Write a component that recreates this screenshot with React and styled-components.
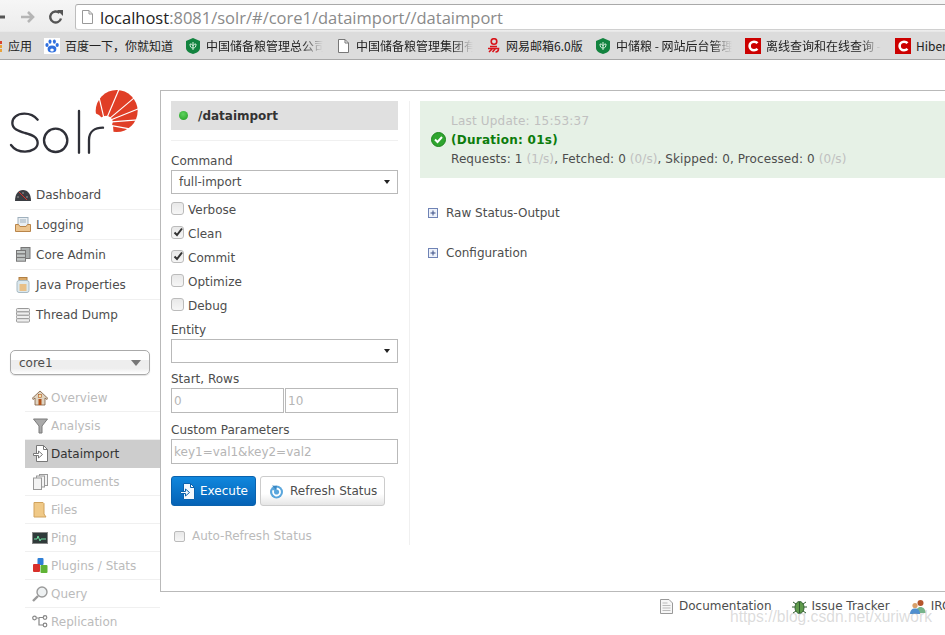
import React from 'react';
import styled, { createGlobalStyle } from 'styled-components';

const Global = createGlobalStyle`
	html, body {
		margin: 0;
		padding: 0;
		background: #fff;
	}
	body {
		width: 945px;
		height: 635px;
		overflow: hidden;
		font-family: 'DejaVu Sans', Verdana, sans-serif;
		font-size: 12px;
		color: #4d4d4d;
	}
`;

const Page = styled.div`
	position: relative;
	width: 945px;
	height: 635px;
	overflow: hidden;
`;

const Toolbar = styled.div`
	display: flex;
	align-items: center;
	height: 31px;
	padding-top: 3px;
	box-sizing: border-box;
	background: linear-gradient(#f6f6f6, #ececec);
`;

const NavButton = styled.div`
	display: flex;
	width: ${(p) => p.$w}px;
	margin-left: ${(p) => p.$ml || 0}px;
	justify-content: center;
`;

const AddressBar = styled.div`
	display: flex;
	align-items: center;
	gap: 7px;
	flex: 1;
	height: 26px;
	margin-left: 11px;
	padding-left: 6px;
	background: #fff;
	border-top: 1px solid #a9a9a9;
	border-left: 1px solid #bdbdbd;
	border-bottom: 1px solid #d0d0d0;
	border-radius: 3px 0 0 3px;
	box-sizing: border-box;
	font-family: 'Open Sans', 'Noto Sans', sans-serif;
	font-size: 16.5px;
	color: #8a8a8a;
	white-space: nowrap;
	overflow: hidden;

	b {
		font-weight: 400;
		color: #222;
	}
`;

const Bookmarks = styled.div`
	display: flex;
	align-items: center;
	height: 29px;
	box-sizing: border-box;
	background: #dcdcdc;
	border-bottom: 1px solid #a8a8a8;
	border-top: 1px solid #e8e8e8;
	overflow: hidden;
`;

const Bookmark = styled.div`
	display: flex;
	flex: none;
	align-items: center;
	gap: ${(p) => p.$gap}px;
	margin-left: ${(p) => p.$ml}px;
`;

const BookmarkText = styled.span`
	display: block;
	width: ${(p) => p.$w}px;
	white-space: nowrap;
	overflow: ${(p) => (p.$fade ? 'hidden' : 'visible')};
	font-family: 'Noto Sans CJK SC', 'Liberation Sans', sans-serif;
	font-size: 12px;
	color: #222;
	${(p) => p.$fade && 'mask-image: linear-gradient(90deg, #000 82%, transparent);'}
`;

const Content = styled.div`
	display: flex;
	align-items: flex-start;
	padding-top: 30px;
`;

const Sidebar = styled.div`
	flex: none;
	width: 160px;
`;

const LogoWrap = styled.div`
	height: 75px;
	padding-left: 5px;
	margin-top: -5px;
`;

const MainNav = styled.div`
	margin: 20px 0 0 10px;
`;

const IconSlot = styled.span`
	display: flex;
	flex: none;
	justify-content: center;
	width: ${(p) => p.$w}px;
`;

const NavItem = styled.div`
	display: flex;
	align-items: center;
	gap: 4px;
	height: 30px;
	box-sizing: border-box;
	padding-left: 4px;
	border-bottom: ${(p) => (p.$last ? 'none' : '1px solid #f0f0f0')};
	white-space: nowrap;
`;

const CoreSelect = styled.div`
	display: flex;
	align-items: center;
	justify-content: space-between;
	width: 140px;
	height: 25px;
	margin: 20px 0 0 10px;
	padding: 0 8px 0 8px;
	box-sizing: border-box;
	border: 1px solid #aaa;
	border-radius: 5px;
	background: linear-gradient(#fff 0 40%, #eee 40% 75%, #fff);
	box-shadow: 0 1px 1px rgba(0, 0, 0, 0.12);
`;

const Caret = styled.span`
	width: 0;
	height: 0;
	border-left: ${(p) => p.$size}px solid transparent;
	border-right: ${(p) => p.$size}px solid transparent;
	border-top: ${(p) => p.$size + 1}px solid ${(p) => p.$color};
`;

const SubNav = styled.div`
	margin: 9px 0 0 25px;
`;

const SubItem = styled.div`
	display: flex;
	align-items: center;
	gap: 3px;
	height: 28px;
	box-sizing: border-box;
	padding-left: 7px;
	white-space: nowrap;
	color: ${(p) => (p.$active ? '#333' : '#bbb')};
	background: ${(p) => (p.$active ? '#cdcdcd' : 'transparent')};
	border-bottom: 1px solid ${(p) => (p.$active ? '#cdcdcd' : '#f0f0f0')};
`;

const Main = styled.div`
	flex: none;
	width: 785px;
	box-sizing: border-box;
`;

const MainBox = styled.div`
	display: flex;
	height: 502px;
	padding-top: 10px;
	box-sizing: border-box;
	border: 1px solid #b9b9b9;
	border-width: 1px 0 1px 1px;
`;

const FormCol = styled.div`
	flex: none;
	width: 249px;
	height: 444px;
	padding: 0 11px 0 10px;
	box-sizing: border-box;
	border-right: 1px solid #f0f0f0;
`;

const Header = styled.div`
	display: flex;
	align-items: center;
	gap: 10px;
	height: 29px;
	padding-left: 8px;
	background: #e0e0e0;
	font-weight: 700;
	font-size: 12px;
	color: #333;
`;

const Dot = styled.span`
	width: 9px;
	height: 9px;
	border-radius: 50%;
	background: radial-gradient(circle at 45% 35%, #5fd35f, #1f9a1f);
`;

const Rule = styled.div`
	height: 1px;
	margin: 10px 0 13px;
	background: #f0f0f0;
`;

const FieldLabel = styled.div`
	height: 14px;
	line-height: 14px;
	margin-top: ${(p) => p.$mt || 0}px;
`;

const SelectBox = styled.div`
	display: flex;
	align-items: center;
	justify-content: space-between;
	width: 227px;
	height: 24px;
	margin-top: 2px;
	padding: 0 7px 1px;
	box-sizing: border-box;
	border: 1px solid #b9b9b9;
`;

const CheckList = styled.div`
	padding-top: 4px;
`;

const CheckRow = styled.div`
	display: flex;
	align-items: center;
	gap: 4px;
	height: 24px;
	color: ${(p) => (p.$muted ? '#bbb' : '#4d4d4d')};
`;

const CheckBox = styled.span`
	display: flex;
	align-items: center;
	justify-content: center;
	flex: none;
	width: 11px;
	height: 11px;
	margin-top: -4px;
	border: 1px solid #bbb;
	border-radius: 3px;
	background: linear-gradient(#e8e8e8, #f6f6f6);
	color: #333;
	box-sizing: content-box;
`;

const InputRow = styled.div`
	display: flex;
	gap: 1px;
	margin-top: 2px;
`;

const TextField = styled.div`
	display: flex;
	align-items: center;
	width: ${(p) => p.$w}px;
	height: 25px;
	padding-left: 2px;
	box-sizing: border-box;
	border: 1px solid #b9b9b9;
	color: #b5b5b5;
	font-size: 12px;
`;

const Actions = styled.div`
	display: flex;
	gap: 4px;
	margin-top: 12px;
`;

const Button = styled.div`
	display: flex;
	flex: none;
	align-items: center;
	gap: ${(p) => (p.$primary ? 5 : 6)}px;
	height: 30px;
	padding: 0 0 0 8px;
	box-sizing: border-box;
	width: ${(p) => p.$w}px;
	white-space: nowrap;
	border-radius: 3px;
	border: 1px solid ${(p) => (p.$primary ? '#0a62ad' : '#ccc')};
	background: ${(p) =>
		p.$primary ? 'linear-gradient(#1087dd, #0562b5)' : 'linear-gradient(#fff 60%, #e6e6e6)'};
	color: ${(p) => (p.$primary ? '#fff' : '#4d4d4d')};
`;

const AutoRefresh = styled.div`
	margin: 18px 0 0 3px;
`;

const SmallCheck = styled(CheckBox)`
	width: 9px;
	height: 9px;
	margin-top: 0;
	border-radius: 2px;
`;

const AutoLabel = styled.span`
	margin-left: 3px;
`;

const StatusCol = styled.div`
	flex: 1;
	padding-left: 10px;
`;

const StatusBox = styled.div`
	display: flex;
	height: 77px;
	padding: 11px 0 0 11px;
	box-sizing: border-box;
	background: #e6f1e6;
`;

const StatusIcon = styled.div`
	flex: none;
	width: 20px;
	padding-top: 20px;
`;

const StatusLines = styled.div`
	line-height: 19px;
	white-space: nowrap;
`;

const Muted = styled.span`
	color: #c0c0c0;
`;

const LastUpdate = styled(Muted)`
	display: block;
	letter-spacing: 0.2px;
`;

const Duration = styled.div`
	font-weight: 700;
	letter-spacing: 0.27px;
	color: #0c7c0c;
`;

const Counts = styled.div`
	letter-spacing: 0.09px;
`;

const Expander = styled.div`
	display: flex;
	align-items: center;
	gap: 8px;
	height: 16px;
	margin: ${(p) => p.$mt}px 0 0 8px;
`;

const Footer = styled.div`
	display: flex;
	align-items: center;
	height: 28px;
	white-space: nowrap;
`;

const FooterLink = styled.div`
	display: flex;
	flex: none;
	align-items: center;
	gap: ${(p) => p.$gap}px;
	margin-left: ${(p) => p.$ml}px;
`;

const Watermark = styled.div`
	position: absolute;
	left: 730px;
	top: 608px;
	font-family: 'Liberation Sans', Arial, sans-serif;
	font-size: 15.6px;
	color: rgba(170, 170, 170, 0.42);
	white-space: nowrap;
`;

function Svg({ w = 16, h = 16, vb, children }) {
	return (
		<svg width={w} height={h} viewBox={vb || `0 0 ${w} ${h}`} style={{ flex: 'none', display: 'block' }}>
			{children}
		</svg>
	);
}

// drawn in 3x units, the white rays and the hole cut the red disc into wedges
const SolrLogo = () => (
	<svg width="140" height="75" viewBox="0 0 420 225" style={{ display: 'block' }}>
		<circle cx="335" cy="78" r="63" fill="#e03e26" />
		<path d="M262 80l20 10 24 24 18 8 2 24h-64z" fill="#fff" />
		<circle cx="303" cy="112" r="20" fill="#fff" />
		<g stroke="#fff" strokeWidth="3.5">
			<path d="M300 112L280 28" />
			<path d="M300 112L344 8" />
			<path d="M300 112L400 28" />
			<path d="M300 112L408 68" />
			<path d="M300 112L408 104" />
			<path d="M300 118L398 136" />
		</g>
		<g fill="none" stroke="#2f3038" strokeWidth="7" strokeLinecap="round">
			<path d="M98 104C88 92 72 86 58 86 36 86 22 98 22 114 22 132 40 138 60 144 82 150 98 156 98 174 98 190 80 200 60 200 42 200 28 194 18 180" />
			<circle cx="152" cy="166" r="35" />
			<path d="M222 78V203" />
			<path d="M252 203V165C252 140 270 128 294 128" />
		</g>
	</svg>
);

const Shield = () => (
	<Svg w={14} h={16}>
		<path d="M7 0l7 3v7c0 3-3 5-7 6-4-1-7-3-7-6V3z" fill="#12833f" />
		<path d="M7 4v8M4 6c0 3 1 4 3 4 2 0 3-1 3-4-2 0-3 1-3 2 0-1-1-2-3-2z" stroke="#d6f0dc" strokeWidth="1" fill="none" />
	</Svg>
);

const RedC = () => (
	<Svg w={16} h={16}>
		<rect width="16" height="16" fill="#cc0000" />
		<path d="M12.5 5.2C11.6 4.2 10.4 3.8 9 3.8 6.6 3.8 4.6 5.6 4.6 8s2 4.2 4.4 4.2c1.4 0 2.6-.5 3.5-1.4" fill="none" stroke="#fff" strokeWidth="2.6" />
	</Svg>
);

const PageIcon = ({ stroke = '#777' }) => (
	<Svg w={11} h={14}>
		<path d="M.5.5h6.500l3.500 3.500v9.500H.5z" fill="#fff" stroke={stroke} />
		<path d="M7 .5V4h3.500" fill="none" stroke={stroke} />
	</Svg>
);

const AppsGrid = () => (
	<Svg w={3} h={14}>
		<rect y="2" width="2" height="3" fill="#d8432f" />
		<rect y="6" width="2" height="3" fill="#e8a33a" />
		<rect y="10" width="2" height="3" fill="#e8a33a" />
	</Svg>
);

const Baidu = () => (
	<Svg w={16} h={16}>
		<rect width="16" height="16" fill="#fff" />
		<g fill="#2f6fde">
			<ellipse cx="8" cy="11" rx="4.400" ry="3.600" />
			<ellipse cx="3" cy="7" rx="1.600" ry="2" />
			<ellipse cx="6" cy="3.600" rx="1.500" ry="2.200" />
			<ellipse cx="10.400" cy="3.600" rx="1.500" ry="2.200" />
			<ellipse cx="13.200" cy="7" rx="1.600" ry="2" />
		</g>
		<ellipse cx="8" cy="12" rx="1.800" ry="1.600" fill="#fff" />
	</Svg>
);

const Netease = () => (
	<Svg w={13} h={15}>
		<circle cx="7" cy="3.500" r="2.800" fill="none" stroke="#d8141a" strokeWidth="1.600" />
		<path d="M3 8.500h7M1 10.500h10.500c0 2-1 3.500-3 3.500M5.500 10.500L2 14M8.500 10.500L5.500 14" fill="none" stroke="#d8141a" strokeWidth="1.600" />
	</Svg>
);

const Gauge = () => (
	<Svg w={16} h={12}>
		<path d="M0 12C0 5 3 1 8 1s8 4 8 11z" fill="#3b3d42" />
		<path d="M4 3l8 8" stroke="#d9342b" strokeWidth="1" />
		<path d="M2 8h2M8 3v2M13 8h-2" stroke="#999" strokeWidth="1" />
	</Svg>
);

const Tray = () => (
	<Svg w={16} h={15}>
		<rect x="3" y="0.500" width="10" height="9" fill="#e9eef2" stroke="#9fb0bd" />
		<path d="M5 3h6M5 5h6" stroke="#9fb0bd" />
		<path d="M0.500 7.500h3l1.500 2h6l1.500-2h3v7H.5z" fill="#ecc48e" stroke="#b9854a" />
	</Svg>
);

const Servers = () => (
	<Svg w={15} h={15}>
		<rect x="5" y="0.500" width="9" height="11" fill="#a9aeae" stroke="#777" />
		<rect x="0.500" y="3.500" width="9" height="3.400" fill="#c2c7c6" stroke="#777" />
		<rect x="0.500" y="7" width="9" height="3.400" fill="#c2c7c6" stroke="#777" />
		<rect x="0.500" y="10.600" width="9" height="3.600" fill="#c2c7c6" stroke="#777" />
	</Svg>
);

const Jar = () => (
	<Svg w={14} h={16}>
		<rect x="3" y="0.500" width="8" height="3" fill="#d9a866" stroke="#b07f43" />
		<rect x="1" y="3.500" width="12" height="12" rx="2" fill="#dbe8ee" stroke="#a9bac3" />
		<rect x="3.500" y="7" width="7" height="7" fill="#e8c088" />
	</Svg>
);

const Stack = () => (
	<Svg w={14} h={15}>
		<g fill="#eee" stroke="#999">
			<rect x="0.500" y="0.500" width="13" height="3.400" rx="1" />
			<rect x="0.500" y="3.900" width="13" height="3.400" rx="1" />
			<rect x="0.500" y="7.300" width="13" height="3.400" rx="1" />
			<rect x="0.500" y="10.700" width="13" height="3.400" rx="1" />
		</g>
	</Svg>
);

const House = () => (
	<Svg w={16} h={16}>
		<path d="M8 1L0 8.500l1 1L3 8v7h10V8l2 1.500 1-1z" fill="#dfd4c2" stroke="#7d5b3c" strokeWidth=".8" />
		<rect x="6.500" y="9" width="3" height="6" fill="#b4551d" />
		<rect x="6.500" y="4.500" width="3" height="3" fill="#f3e5b0" stroke="#b4551d" strokeWidth=".6" />
	</Svg>
);

const Funnel = () => (
	<Svg w={15} h={16}>
		<path d="M.5 1h14L9 8v7H6V8z" fill="#aaa" stroke="#7b7b7b" />
	</Svg>
);

const FileArrow = ({ fill = '#fff', stroke = '#777' }) => (
	<Svg w={15} h={17}>
		<path d="M3.500.5h7l4 4v12h-11z" fill={fill} stroke={stroke} />
		<path d="M10.500.5v4h4" fill="none" stroke={stroke} />
		<path d="M.5 8.500h5V6l4 3.500-4 3.500v-2.500h-5z" fill={fill} stroke={stroke} />
	</Svg>
);

const Docs = () => (
	<Svg w={15} h={16}>
		<g fill="#f3f3f3" stroke="#999">
			<rect x="6.500" y=".5" width="8" height="11" />
			<rect x="3.500" y="2" width="8" height="11" />
			<rect x=".5" y="4" width="8" height="11.500" />
		</g>
	</Svg>
);

const Folder = () => (
	<Svg w={14} h={16}>
		<path d="M1 .5h9l1 1V12l2 3H1z" fill="#f0c987" stroke="#d0a25c" />
	</Svg>
);

const Monitor = () => (
	<Svg w={16} h={12}>
		<rect x=".5" y=".5" width="15" height="11" fill="#2f3a3a" stroke="#888" />
		<path d="M2 7h3l1-3 2 5 1-2h5" fill="none" stroke="#6fe0a0" />
	</Svg>
);

const Blocks = () => (
	<Svg w={15} h={15}>
		<rect x="4.500" y="0" width="6" height="7" rx="1" fill="#2f7fd6" />
		<rect x="0" y="6" width="7" height="8" rx="1" fill="#d8302b" />
		<rect x="7.500" y="7" width="7" height="8" rx="1" fill="#5fb334" />
	</Svg>
);

const Magnifier = () => (
	<Svg w={16} h={16}>
		<circle cx="10" cy="6" r="5" fill="#eef1f2" stroke="#9a9a9a" strokeWidth="1.400" />
		<path d="M6 10l-5 5" stroke="#9a9a9a" strokeWidth="2.400" />
	</Svg>
);

const Replication = () => (
	<Svg w={16} h={13}>
		<g fill="none" stroke="#888" strokeWidth="1.200">
			<circle cx="2.500" cy="3" r="1.800" />
			<circle cx="13" cy="2.500" r="1.800" />
			<circle cx="13" cy="10" r="1.800" />
			<path d="M4.500 3h2.500v7h4M7 2.500h4" />
		</g>
	</Svg>
);

const CheckMark = () => (
	<Svg w={10} h={10}>
		<path d="M1.500 5.500l2.500 2.500 5-6.500" fill="none" stroke="#333" strokeWidth="2" />
	</Svg>
);

const Refresh = () => (
	<Svg w={15} h={15}>
		<circle cx="7.500" cy="8" r="6.500" fill="#5aa6dc" />
		<path d="M7.500 4.500a3.500 3.500 0 1 1-3 1.800" fill="none" stroke="#fff" strokeWidth="1.800" />
		<path d="M3 1.500l5 .5-1 4z" fill="#3a88c4" />
	</Svg>
);

const GreenCheck = () => (
	<Svg w={15} h={15}>
		<circle cx="7.500" cy="7.500" r="7" fill="#2fa52f" stroke="#1c861c" />
		<path d="M4 7.500l2.500 2.500 4.500-5" fill="none" stroke="#fff" strokeWidth="2" />
	</Svg>
);

const PlusBox = () => (
	<Svg w={10} h={10}>
		<rect x=".5" y=".5" width="9" height="9" fill="#eef2fa" stroke="#6f83b5" />
		<path d="M2.500 5h5M5 2.500v5" stroke="#3a4f86" />
	</Svg>
);

const DocIcon = () => (
	<Svg w={13} h={15}>
		<path d="M.5.5h8.500l3.500 3.500v10.500H.5z" fill="#f6f6f6" stroke="#999" />
		<path d="M2.500 4h5M2.500 6.500h8M2.500 9h8M2.500 11.500h8" stroke="#bbb" />
	</Svg>
);

const Bug = () => (
	<Svg w={15} h={15}>
		<path d="M1 3l3 2M14 3l-3 2M0 8h3M15 8h-3M1 14l3-2M14 14l-3-2" stroke="#2f5d2f" />
		<ellipse cx="7.500" cy="8.500" rx="4.500" ry="6" fill="#5f9b4b" stroke="#2f5d2f" />
		<path d="M7.500 3v11" stroke="#2f5d2f" />
	</Svg>
);

const People = () => (
	<Svg w={16} h={15}>
		<circle cx="10.500" cy="4" r="3" fill="#b5552c" />
		<path d="M6 14c0-4 2-6 4.500-6S15.500 10 15.500 14z" fill="#77b48a" />
		<circle cx="5" cy="6.500" r="2.600" fill="#d9a06b" />
		<path d="M0 15c0-3.500 2-5.500 5-5.500S10 11.500 10 15z" fill="#4f8fcf" />
	</Svg>
);

const bookmarks = [
	{ ml: 5, gap: 0, icon: null, text: '应用', w: 26 },
	{ ml: 10, gap: 5, icon: <Baidu />, text: '百度一下，你就知道', w: 108 },
	{ ml: 13, gap: 6, icon: <Shield />, text: '中国储备粮管理总公司', w: 117, fade: true },
	{ ml: 15, gap: 7, icon: <PageIcon />, text: '中国储备粮管理集团有', w: 117, fade: true },
	{ ml: 14, gap: 6, icon: <Netease />, text: '网易邮箱6.0版', w: 77 },
	{ ml: 13, gap: 6, icon: <Shield />, text: '中储粮 - 网站后台管理', w: 116, fade: true },
	{ ml: 13, gap: 5, icon: <RedC />, text: '离线查询和在线查询 -', w: 115, fade: true },
	{ ml: 14, gap: 5, icon: <RedC />, text: 'Hiber', w: 30 },
];

const mainNav = [
	{ icon: <Gauge />, label: 'Dashboard' },
	{ icon: <Tray />, label: 'Logging' },
	{ icon: <Servers />, label: 'Core Admin' },
	{ icon: <Jar />, label: 'Java Properties' },
	{ icon: <Stack />, label: 'Thread Dump', last: true },
];

const subNav = [
	{ icon: <House />, label: 'Overview' },
	{ icon: <Funnel />, label: 'Analysis' },
	{ icon: <FileArrow />, label: 'Dataimport', active: true },
	{ icon: <Docs />, label: 'Documents' },
	{ icon: <Folder />, label: 'Files' },
	{ icon: <Monitor />, label: 'Ping' },
	{ icon: <Blocks />, label: 'Plugins / Stats' },
	{ icon: <Magnifier />, label: 'Query' },
	{ icon: <Replication />, label: 'Replication' },
];

const checks = [
	{ label: 'Verbose' },
	{ label: 'Clean', on: true },
	{ label: 'Commit', on: true },
	{ label: 'Optimize' },
	{ label: 'Debug' },
];

export default function App() {
	return (
		<Page>
			<Global />
			<Toolbar>
				<NavButton $w={5}>
					<Svg w={5} h={14}>
						<path d="M-2 7h7" stroke="#555" strokeWidth="3" />
					</Svg>
				</NavButton>
				<NavButton $w={15} $ml={15}>
					<Svg w={15} h={14}>
						<path d="M1 7h11M8 2l5 5-5 5" fill="none" stroke="#b5b5b5" strokeWidth="2.600" />
					</Svg>
				</NavButton>
				<NavButton $w={16} $ml={13}>
					<Svg w={16} h={16}>
						<path d="M13 9.500A5.500 5.500 0 1 1 11.500 4" fill="none" stroke="#555" strokeWidth="2.400" />
						<path d="M9 1h6v6z" fill="#555" />
					</Svg>
				</NavButton>
				<AddressBar>
					<PageIcon stroke="#999" />
					<span>
						<b>localhost</b>:8081/solr/#/core1/dataimport//dataimport
					</span>
				</AddressBar>
			</Toolbar>
			<Bookmarks>
				<AppsGrid />
				{bookmarks.map((b) => (
					<Bookmark key={b.text} $ml={b.ml} $gap={b.gap}>
						{b.icon}
						<BookmarkText $w={b.w} $fade={b.fade}>
							{b.text}
						</BookmarkText>
					</Bookmark>
				))}
			</Bookmarks>
			<Content>
				<Sidebar>
					<LogoWrap>
						<SolrLogo />
					</LogoWrap>
					<MainNav>
						{mainNav.map((n) => (
							<NavItem key={n.label} $last={n.last}>
								<IconSlot $w={18}>{n.icon}</IconSlot>
								{n.label}
							</NavItem>
						))}
					</MainNav>
					<CoreSelect>
						core1
						<Caret $size={5} $color="#777" />
					</CoreSelect>
					<SubNav>
						{subNav.map((n) => (
							<SubItem key={n.label} $active={n.active}>
								<IconSlot $w={16}>{n.icon}</IconSlot>
								{n.label}
							</SubItem>
						))}
					</SubNav>
				</Sidebar>
				<Main>
					<MainBox>
						<FormCol>
							<Header>
								<Dot />
								/dataimport
							</Header>
							<Rule />
							<FieldLabel>Command</FieldLabel>
							<SelectBox>
								full-import
								<Caret $size={3} $color="#222" />
							</SelectBox>
							<CheckList>
								{checks.map((c) => (
									<CheckRow key={c.label}>
										<CheckBox>{c.on && <CheckMark />}</CheckBox>
										{c.label}
									</CheckRow>
								))}
							</CheckList>
							<FieldLabel $mt={5}>Entity</FieldLabel>
							<SelectBox>
								<span />
								<Caret $size={3} $color="#222" />
							</SelectBox>
							<FieldLabel $mt={9}>Start, Rows</FieldLabel>
							<InputRow>
								<TextField $w={113}>0</TextField>
								<TextField $w={113}>10</TextField>
							</InputRow>
							<FieldLabel $mt={10}>Custom Parameters</FieldLabel>
							<InputRow>
								<TextField $w={228}>key1=val1&amp;key2=val2</TextField>
							</InputRow>
							<Actions>
								<Button $primary $w={85}>
									<FileArrow fill="#f4f8fc" stroke="#0a62ad" />
									Execute
								</Button>
								<Button $w={125}>
									<Refresh />
									Refresh Status
								</Button>
							</Actions>
							<AutoRefresh>
								<CheckRow $muted>
									<SmallCheck />
									<AutoLabel>Auto-Refresh Status</AutoLabel>
								</CheckRow>
							</AutoRefresh>
						</FormCol>
						<StatusCol>
							<StatusBox>
								<StatusIcon>
									<GreenCheck />
								</StatusIcon>
								<StatusLines>
									<LastUpdate>Last Update: 15:53:37</LastUpdate>
									<Duration>(Duration: 01s)</Duration>
									<Counts>
										Requests: 1 <Muted>(1/s)</Muted>, Fetched: 0 <Muted>(0/s)</Muted>, Skipped: 0,
										Processed: 0 <Muted>(0/s)</Muted>
									</Counts>
								</StatusLines>
							</StatusBox>
							<Expander $mt={27}>
								<PlusBox />
								Raw Status-Output
							</Expander>
							<Expander $mt={24}>
								<PlusBox />
								Configuration
							</Expander>
						</StatusCol>
					</MainBox>
					<Footer>
						<FooterLink $ml={500} $gap={6}>
							<DocIcon />
							Documentation
						</FooterLink>
						<FooterLink $ml={20} $gap={5}>
							<Bug />
							Issue Tracker
						</FooterLink>
						<FooterLink $ml={20} $gap={5}>
							<People />
							IRC Channel
						</FooterLink>
					</Footer>
				</Main>
			</Content>
			<Watermark>https://blog.csdn.net/xuriwork</Watermark>
		</Page>
	);
}
